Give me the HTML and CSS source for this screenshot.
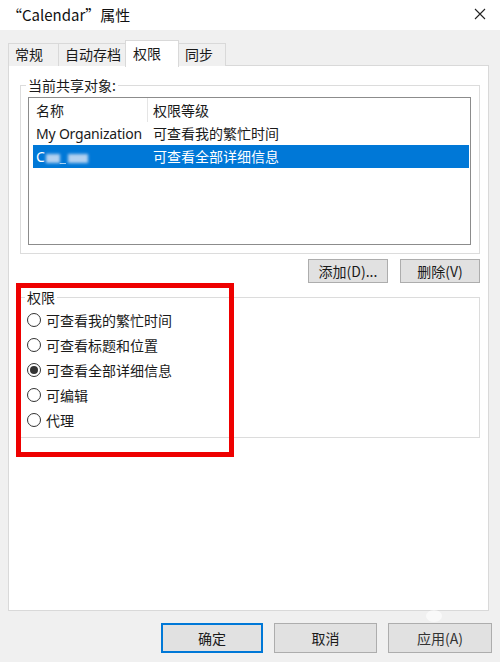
FILE: index.html
```html
<!DOCTYPE html>
<html lang="zh-CN">
<head>
<meta charset="utf-8">
<title>Calendar 属性</title>
<link rel="stylesheet" href="styles.css">
</head>
<body>
<div class="window">
  <div class="titlebar">
    <span class="title">“Calendar”属性</span>
    <span class="close">
      <svg width="12" height="12" viewBox="0 0 12 12"><path d="M1 1 L11 11 M11 1 L1 11" stroke="#222" stroke-width="1.1" fill="none"/></svg>
    </span>
  </div>

  <div class="tabs">
    <div class="tab t1">常规</div>
    <div class="tab t2">自动存档</div>
    <div class="tab active t3">权限</div>
    <div class="tab t4">同步</div>
  </div>

  <div class="panel">
    <fieldset class="group share">
      <legend>当前共享对象:</legend>
      <div class="list">
        <div class="list-head">
          <div class="col1">名称</div>
          <div class="col2">权限等级</div>
        </div>
        <div class="row">
          <div class="col1 latin">My Organization</div>
          <div class="col2">可查看我的繁忙时间</div>
        </div>
        <div class="row selected">
          <div class="col1 latin">C<span class="blur b1"></span><span class="under">_</span><span class="blur b2"></span></div>
          <div class="col2">可查看全部详细信息</div>
        </div>
      </div>
    </fieldset>

    <div class="actions">
      <button class="btn small">添加(D)...</button>
      <button class="btn small">删除(V)</button>
    </div>

    <fieldset class="group perms">
      <legend>权限</legend>
      <label class="radio"><span class="dot"></span>可查看我的繁忙时间</label>
      <label class="radio"><span class="dot"></span>可查看标题和位置</label>
      <label class="radio"><span class="dot checked"></span>可查看全部详细信息</label>
      <label class="radio"><span class="dot"></span>可编辑</label>
      <label class="radio"><span class="dot"></span>代理</label>
    </fieldset>
  </div>

  <div class="footer">
    <button class="btn big default">确定</button>
    <button class="btn big">取消</button>
    <button class="btn big apply">应用(A)</button>
  </div>

  <div class="highlight"></div>
  <svg class="paw" width="40" height="30" viewBox="0 0 40 30">
    <ellipse cx="12" cy="8" rx="3" ry="4" fill="#fff"/>
    <ellipse cx="20" cy="5" rx="3" ry="4" fill="#fff"/>
    <ellipse cx="28" cy="8" rx="3" ry="4" fill="#fff"/>
    <ellipse cx="20" cy="20" rx="8" ry="6" fill="#fff"/>
  </svg>
</div>
</body>
</html>
```

FILE: styles.css
```css
* { box-sizing: border-box; }
html, body {
  margin: 0;
  padding: 0;
}
body {
  width: 500px;
  height: 662px;
  background: #f0f0f0;
  font-family: "Noto Sans CJK SC", "Noto Sans", sans-serif;
  font-size: 14px;
  color: #1a1a1a;
  overflow: hidden;
}
.window {
  position: relative;
  width: 500px;
  height: 662px;
}
.titlebar {
  height: 30px;
  background: #ffffff;
  display: flex;
  align-items: center;
  justify-content: space-between;
  padding: 0 14px 2px 7px;
}
.title {
  font-size: 15px;
  color: #111;
}
.close {
  display: flex;
  align-items: center;
}

.tabs {
  display: flex;
  align-items: flex-end;
  height: 36px;
  padding: 10px 0 0 8px;
  position: relative;
  z-index: 2;
}
.tab {
  height: 23px;
  border: 1px solid #d9d9d9;
  border-bottom: none;
  background: #f0f0f0;
  padding: 0 0 0 6px;
  line-height: 21px;
  color: #1a1a1a;
  margin-right: -1px;
}
.t1 { width: 51px; }
.t2 { width: 68px; }
.t3 { width: 54px; padding-left: 7px; }
.t4 { width: 48px; }
.tab.active {
  height: 27px;
  background: #ffffff;
  margin-bottom: -1px;
  line-height: 24px;
  position: relative;
  z-index: 3;
}

.panel {
  margin: -1px 11px 0 8px;
  height: 546px;
  background: #ffffff;
  border: 1px solid #d9d9d9;
  padding: 10px 8px 0 11px;
}

.group {
  margin: 0;
  border: 1px solid #dcdcdc;
  padding: 0 8px 7px 7px;
  min-width: 0;
}
.group legend {
  padding: 0 2px;
  margin-left: -2px;
  line-height: 18px;
  color: #1a1a1a;
}
.share {
  height: 178px;
  padding-top: 3px;
}
.list {
  height: 148px;
  border: 1px solid #8c8c8c;
  background: #fff;
}
.list-head {
  display: flex;
  height: 24px;
  align-items: center;
}
.list-head .col1 {
  width: 119px;
  padding-left: 7px;
  border-right: 1px solid #e5e5e5;
  height: 24px;
  line-height: 24px;
}
.list-head .col2 {
  padding-left: 5px;
}
.row {
  display: flex;
  height: 23px;
  line-height: 23px;
  margin: 0 1px 0 4px;
}
.row .col1 {
  width: 114px;
  padding-left: 3px;
  white-space: nowrap;
}
.latin {
  font-family: "Noto Sans", "Noto Sans CJK SC", sans-serif;
  letter-spacing: -0.2px;
}
.row .col2 {
  padding-left: 6px;
}
.row.selected {
  background: #0078d7;
  color: #ffffff;
}
.blur {
  display: inline-block;
  height: 9px;
  vertical-align: -1px;
  background: rgba(210, 225, 245, 0.85);
  filter: blur(1.5px);
}
.b1 { width: 14px; margin-left: 1px; }
.b2 { width: 20px; margin-left: 2px; }
.under { opacity: 0.7; }

.actions {
  display: flex;
  justify-content: flex-end;
  gap: 12px;
  margin-top: 5px;
}
.btn {
  font-family: inherit;
  font-size: 14px;
  color: #1a1a1a;
  background: #e1e1e1;
  border: 1px solid #adadad;
  padding: 0;
  margin: 0;
}
.btn.small {
  width: 80px;
  height: 24px;
  line-height: 20px;
}

.perms {
  margin-top: 5px;
  height: 150px;
  padding-top: 1px;
  padding-left: 6px;
}
.radio {
  display: flex;
  align-items: center;
  height: 25px;
  gap: 5px;
  white-space: nowrap;
}
.dot {
  width: 14px;
  height: 14px;
  border: 1px solid #333;
  border-radius: 50%;
  display: flex;
  align-items: center;
  justify-content: center;
  background: #fff;
  flex: none;
}
.dot.checked::after {
  content: "";
  width: 8px;
  height: 8px;
  border-radius: 50%;
  background: #333;
}

.footer {
  display: flex;
  justify-content: flex-end;
  gap: 11px;
  padding: 12px 8px 0 0;
}
.btn.big {
  width: 103px;
  height: 30px;
}
.btn.default {
  width: 102px;
  border: 2px solid #0078d7;
}
.btn.apply {
  width: 104px;
  color: #333;
}

.highlight {
  position: absolute;
  left: 16px;
  top: 283px;
  width: 218px;
  height: 174px;
  border: 5px solid #ee0000;
  pointer-events: none;
}
.paw {
  position: absolute;
  left: 414px;
  top: 596px;
  opacity: 0.6;
  pointer-events: none;
}
```
